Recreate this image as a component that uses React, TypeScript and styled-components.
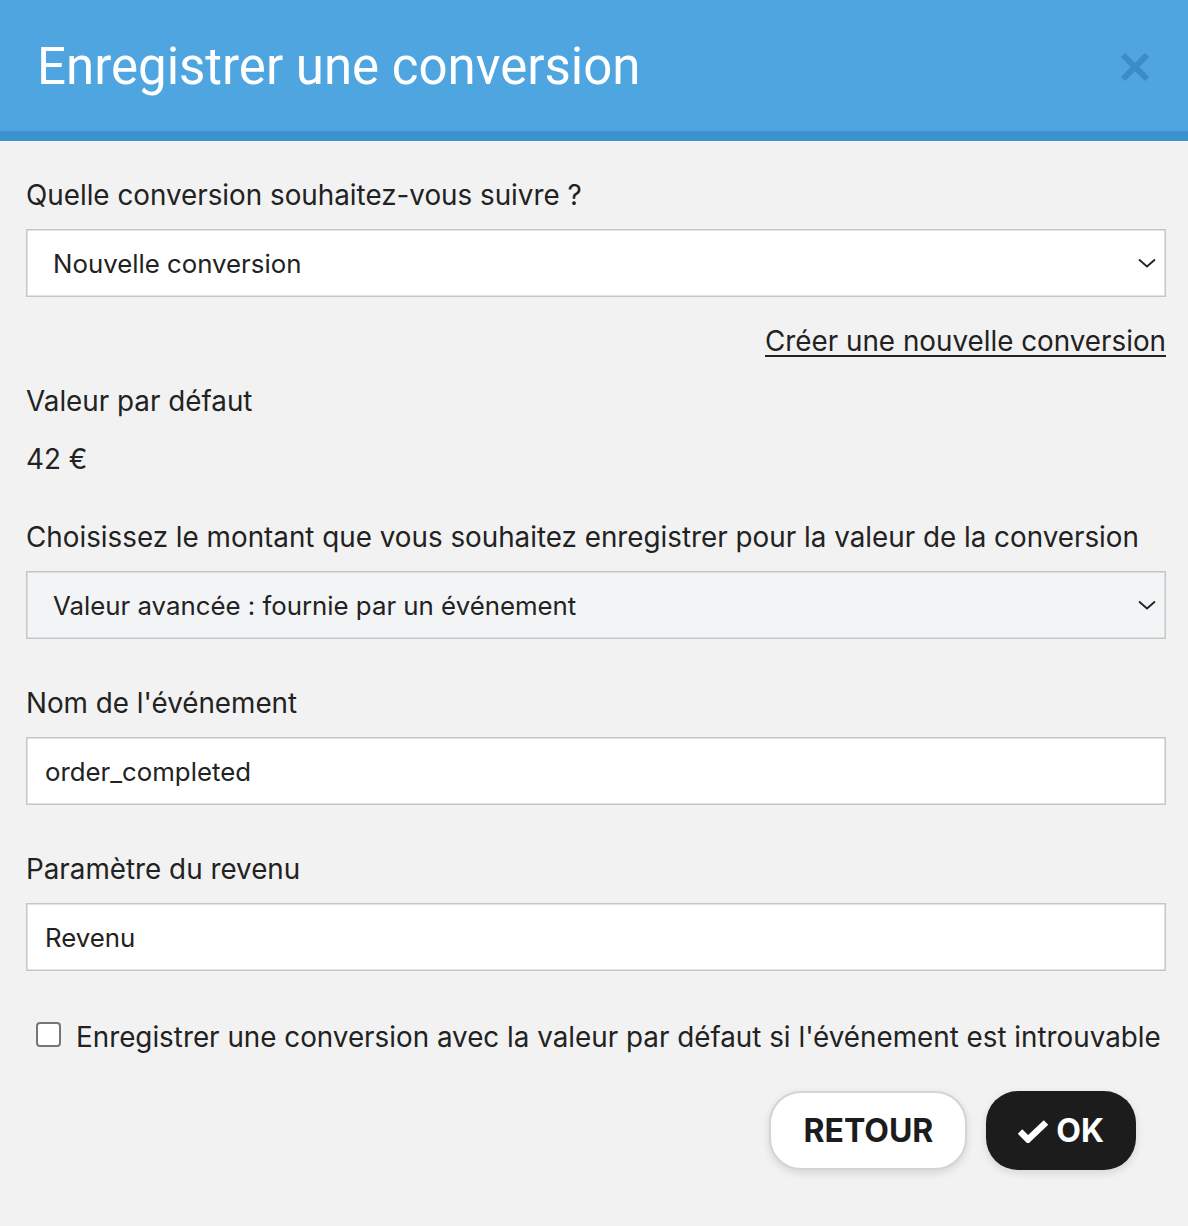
import styled, { createGlobalStyle } from 'styled-components';
import { FC, ReactNode } from 'react';

const GlobalStyle = createGlobalStyle`
  html, body {
    margin: 0;
    padding: 0;
    background: #f2f2f2;
  }
  body {
    font-family: "Inter", "Noto Sans", sans-serif;
    color: #222222;
  }
  * { box-sizing: border-box; }
`;

const Modal = styled.div`
  width: 1188px;
  min-height: 1226px;
  background: #f2f2f2;
  display: flex;
  flex-direction: column;
`;

const Header = styled.header`
  height: 141px;
  background: #4ea5e0;
  border-bottom: 10px solid #3a92cf;
  display: flex;
  align-items: center;
  justify-content: space-between;
  padding: 2px 36px 0 37px;
`;

const Title = styled.h1`
  margin: 0;
  font-family: "Roboto", "Liberation Sans", sans-serif;
  font-weight: 400;
  font-size: 51px;
  color: #ffffff;
`;

const CloseButton = styled.button`
  border: none;
  background: none;
  padding: 0;
  width: 34px;
  height: 34px;
  display: flex;
  align-items: center;
  justify-content: center;
  cursor: pointer;
`;

const Body = styled.div`
  padding: 38px 22px 40px 26px;
  display: flex;
  flex-direction: column;
`;

const Label = styled.div<{ $mt?: number }>`
  font-size: 27.8px;
  line-height: 32px;
  margin-top: ${p => p.$mt ?? 0}px;
  color: #222222;
`;

const Box = styled.div<{ $grey?: boolean; $mt?: number }>`
  height: 68px;
  margin-top: ${p => p.$mt ?? 18}px;
  border: 1px solid #c6c6c6;
  box-shadow: inset 0 0 0 0.5px #c6c6c6;
  background: ${p => (p.$grey ? '#f3f4f6' : '#ffffff')};
  display: flex;
  align-items: center;
  justify-content: space-between;
  font-size: 25.8px;
  color: #222222;
`;

const SelectBox = styled(Box)`
  padding: 0 7px 0 26px;
`;

const InputBox = styled(Box)`
  padding: 0 18px;
`;

const LinkRow = styled.div`
  display: flex;
  justify-content: flex-end;
  margin-top: 28px;
`;

const Link = styled.a`
  font-size: 27.8px;
  line-height: 32px;
  color: #222222;
  text-decoration: underline;
  text-underline-offset: 4px;
  text-decoration-thickness: 2px;
`;

const CheckRow = styled.label`
  display: flex;
  align-items: center;
  gap: 15px;
  margin-top: 50px;
  padding-left: 10px;
  font-size: 27.8px;
  line-height: 32px;
  white-space: nowrap;
`;

const CheckSquare = styled.span`
  width: 25px;
  height: 25px;
  border: 2px solid #767676;
  border-radius: 4px;
  background: #ffffff;
  flex: none;
  margin-top: -6px;
`;

const Actions = styled.div`
  display: flex;
  justify-content: flex-end;
  gap: 19px;
  margin-top: 38px;
  padding-right: 30px;
`;

const Button = styled.button<{ $primary?: boolean }>`
  height: 79px;
  padding: 0 32px;
  border-radius: 32px;
  font-family: "Inter", sans-serif;
  font-weight: 700;
  font-size: 32px;
  display: flex;
  align-items: center;
  gap: 8px;
  cursor: pointer;
  background: ${p => (p.$primary ? '#1c1c1c' : '#ffffff')};
  color: ${p => (p.$primary ? '#ffffff' : '#1c1c1c')};
  border: ${p => (p.$primary ? 'none' : '2px solid #d4d4d4')};
  box-shadow: 0 3px 8px rgba(0, 0, 0, 0.12);
`;

const Chevron = () => (
  <svg width="22" height="14" viewBox="0 0 22 14">
    <path d="M3 3.5 L11 10.5 L19 3.5" fill="none" stroke="#222" strokeWidth="1.8" />
  </svg>
);

const CloseIcon = () => (
  <svg width="32" height="32" viewBox="0 0 32 32">
    <path d="M4 4 L28 28 M28 4 L4 28" stroke="#3a8bc7" strokeWidth="6" />
  </svg>
);

const CheckIcon = () => (
  <svg width="30" height="24" viewBox="0 0 30 24">
    <path d="M2 12.5 L10 20.5 L28 3.5" fill="none" stroke="#fff" strokeWidth="6.5" />
  </svg>
);

const Select: FC<{ grey?: boolean; children: ReactNode }> = ({ grey, children }) => (
  <SelectBox $grey={grey}>
    <span>{children}</span>
    <Chevron />
  </SelectBox>
);

export default function App() {
  return (
    <Modal>
      <GlobalStyle />
      <Header>
        <Title>Enregistrer une conversion</Title>
        <CloseButton aria-label="Fermer">
          <CloseIcon />
        </CloseButton>
      </Header>
      <Body>
        <Label>Quelle conversion souhaitez-vous suivre ?</Label>
        <Select>Nouvelle conversion</Select>
        <LinkRow>
          <Link href="#">Créer une nouvelle conversion</Link>
        </LinkRow>
        <Label $mt={28}>Valeur par défaut</Label>
        <Label $mt={26}>42 €</Label>
        <Label $mt={46}>Choisissez le montant que vous souhaitez enregistrer pour la valeur de la conversion</Label>
        <Select grey>Valeur avancée : fournie par un événement</Select>
        <Label $mt={48}>Nom de l'événement</Label>
        <InputBox>order_completed</InputBox>
        <Label $mt={48}>Paramètre du revenu</Label>
        <InputBox>Revenu</InputBox>
        <CheckRow>
          <CheckSquare />
          <span>Enregistrer une conversion avec la valeur par défaut si l'événement est introuvable</span>
        </CheckRow>
        <Actions>
          <Button>RETOUR</Button>
          <Button $primary>
            <CheckIcon />
            OK
          </Button>
        </Actions>
      </Body>
    </Modal>
  );
}
